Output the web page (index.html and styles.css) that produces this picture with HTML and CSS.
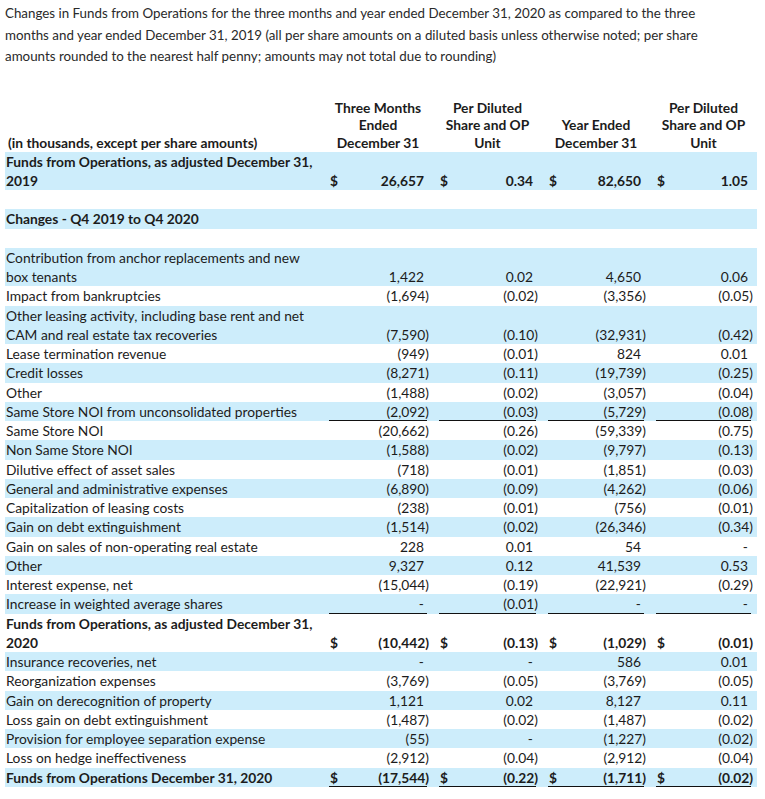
FILE: index.html
```html
<!DOCTYPE html>
<html>
<head>
<meta charset="utf-8">
<link rel="stylesheet" href="styles.css">
</head>
<body>
<p class="intro">Changes in Funds from Operations for the three months and year ended December 31, 2020 as compared to the three<br>months and year ended December 31, 2019 (all per share amounts on a diluted basis unless otherwise noted; per share<br>amounts rounded to the nearest half penny; amounts may not total due to rounding)</p>

<div class="tbl">
  <div class="row head">
    <div class="lbl">(in thousands, except per share amounts)</div>
    <div class="h">Three Months<br>Ended<br>December 31</div>
    <div class="h">Per Diluted<br>Share and OP<br>Unit</div>
    <div class="h">Year Ended<br>December 31</div>
    <div class="h">Per Diluted<br>Share and OP<br>Unit</div>
  </div>

  <div class="row blue bold">
    <div class="lbl">Funds from Operations, as adjusted December 31,<br>2019</div>
    <div class="n"><span class="d">$</span><span class="v">26,657</span></div>
    <div class="n"><span class="d">$</span><span class="v">0.34</span></div>
    <div class="n"><span class="d">$</span><span class="v">82,650</span></div>
    <div class="n"><span class="d">$</span><span class="v">1.05</span></div>
  </div>
  <div class="row"><div class="lbl">&nbsp;</div></div>
  <div class="row blue bold"><div class="lbl">Changes - Q4 2019 to Q4 2020</div></div>
  <div class="row"><div class="lbl">&nbsp;</div></div>

  <div class="row blue">
    <div class="lbl">Contribution from anchor replacements and new<br>box tenants</div>
    <div class="n"><span class="v">1,422</span></div>
    <div class="n"><span class="v">0.02</span></div>
    <div class="n"><span class="v">4,650</span></div>
    <div class="n"><span class="v">0.06</span></div>
  </div>
  <div class="row">
    <div class="lbl">Impact from bankruptcies</div>
    <div class="n"><span class="v">(1,694<i>)</i></span></div>
    <div class="n"><span class="v">(0.02<i>)</i></span></div>
    <div class="n"><span class="v">(3,356<i>)</i></span></div>
    <div class="n"><span class="v">(0.05<i>)</i></span></div>
  </div>
  <div class="row blue">
    <div class="lbl">Other leasing activity, including base rent and net<br>CAM and real estate tax recoveries</div>
    <div class="n"><span class="v">(7,590<i>)</i></span></div>
    <div class="n"><span class="v">(0.10<i>)</i></span></div>
    <div class="n"><span class="v">(32,931<i>)</i></span></div>
    <div class="n"><span class="v">(0.42<i>)</i></span></div>
  </div>
  <div class="row">
    <div class="lbl">Lease termination revenue</div>
    <div class="n"><span class="v">(949<i>)</i></span></div>
    <div class="n"><span class="v">(0.01<i>)</i></span></div>
    <div class="n"><span class="v">824</span></div>
    <div class="n"><span class="v">0.01</span></div>
  </div>
  <div class="row blue">
    <div class="lbl">Credit losses</div>
    <div class="n"><span class="v">(8,271<i>)</i></span></div>
    <div class="n"><span class="v">(0.11<i>)</i></span></div>
    <div class="n"><span class="v">(19,739<i>)</i></span></div>
    <div class="n"><span class="v">(0.25<i>)</i></span></div>
  </div>
  <div class="row">
    <div class="lbl">Other</div>
    <div class="n"><span class="v">(1,488<i>)</i></span></div>
    <div class="n"><span class="v">(0.02<i>)</i></span></div>
    <div class="n"><span class="v">(3,057<i>)</i></span></div>
    <div class="n"><span class="v">(0.04<i>)</i></span></div>
  </div>
  <div class="row blue">
    <div class="lbl">Same Store NOI from unconsolidated properties</div>
    <div class="n ul"><span class="v">(2,092<i>)</i></span></div>
    <div class="n ul"><span class="v">(0.03<i>)</i></span></div>
    <div class="n ul"><span class="v">(5,729<i>)</i></span></div>
    <div class="n ul"><span class="v">(0.08<i>)</i></span></div>
  </div>
  <div class="row">
    <div class="lbl">Same Store NOI</div>
    <div class="n"><span class="v">(20,662<i>)</i></span></div>
    <div class="n"><span class="v">(0.26<i>)</i></span></div>
    <div class="n"><span class="v">(59,339<i>)</i></span></div>
    <div class="n"><span class="v">(0.75<i>)</i></span></div>
  </div>
  <div class="row blue">
    <div class="lbl">Non Same Store NOI</div>
    <div class="n"><span class="v">(1,588<i>)</i></span></div>
    <div class="n"><span class="v">(0.02<i>)</i></span></div>
    <div class="n"><span class="v">(9,797<i>)</i></span></div>
    <div class="n"><span class="v">(0.13<i>)</i></span></div>
  </div>
  <div class="row">
    <div class="lbl">Dilutive effect of asset sales</div>
    <div class="n"><span class="v">(718<i>)</i></span></div>
    <div class="n"><span class="v">(0.01<i>)</i></span></div>
    <div class="n"><span class="v">(1,851<i>)</i></span></div>
    <div class="n"><span class="v">(0.03<i>)</i></span></div>
  </div>
  <div class="row blue">
    <div class="lbl">General and administrative expenses</div>
    <div class="n"><span class="v">(6,890<i>)</i></span></div>
    <div class="n"><span class="v">(0.09<i>)</i></span></div>
    <div class="n"><span class="v">(4,262<i>)</i></span></div>
    <div class="n"><span class="v">(0.06<i>)</i></span></div>
  </div>
  <div class="row">
    <div class="lbl">Capitalization of leasing costs</div>
    <div class="n"><span class="v">(238<i>)</i></span></div>
    <div class="n"><span class="v">(0.01<i>)</i></span></div>
    <div class="n"><span class="v">(756<i>)</i></span></div>
    <div class="n"><span class="v">(0.01<i>)</i></span></div>
  </div>
  <div class="row blue">
    <div class="lbl">Gain on debt extinguishment</div>
    <div class="n"><span class="v">(1,514<i>)</i></span></div>
    <div class="n"><span class="v">(0.02<i>)</i></span></div>
    <div class="n"><span class="v">(26,346<i>)</i></span></div>
    <div class="n"><span class="v">(0.34<i>)</i></span></div>
  </div>
  <div class="row">
    <div class="lbl">Gain on sales of non-operating real estate</div>
    <div class="n"><span class="v">228</span></div>
    <div class="n"><span class="v">0.01</span></div>
    <div class="n"><span class="v">54</span></div>
    <div class="n"><span class="v">-</span></div>
  </div>
  <div class="row blue">
    <div class="lbl">Other</div>
    <div class="n"><span class="v">9,327</span></div>
    <div class="n"><span class="v">0.12</span></div>
    <div class="n"><span class="v">41,539</span></div>
    <div class="n"><span class="v">0.53</span></div>
  </div>
  <div class="row">
    <div class="lbl">Interest expense, net</div>
    <div class="n"><span class="v">(15,044<i>)</i></span></div>
    <div class="n"><span class="v">(0.19<i>)</i></span></div>
    <div class="n"><span class="v">(22,921<i>)</i></span></div>
    <div class="n"><span class="v">(0.29<i>)</i></span></div>
  </div>
  <div class="row blue">
    <div class="lbl">Increase in weighted average shares</div>
    <div class="n ul"><span class="v">-</span></div>
    <div class="n ul"><span class="v">(0.01<i>)</i></span></div>
    <div class="n ul"><span class="v">-</span></div>
    <div class="n ul"><span class="v">-</span></div>
  </div>
  <div class="row bold">
    <div class="lbl">Funds from Operations, as adjusted December 31,<br>2020</div>
    <div class="n"><span class="d">$</span><span class="v">(10,442<i>)</i></span></div>
    <div class="n"><span class="d">$</span><span class="v">(0.13<i>)</i></span></div>
    <div class="n"><span class="d">$</span><span class="v">(1,029<i>)</i></span></div>
    <div class="n"><span class="d">$</span><span class="v">(0.01<i>)</i></span></div>
  </div>
  <div class="row blue">
    <div class="lbl">Insurance recoveries, net</div>
    <div class="n"><span class="v">-</span></div>
    <div class="n"><span class="v">-</span></div>
    <div class="n"><span class="v">586</span></div>
    <div class="n"><span class="v">0.01</span></div>
  </div>
  <div class="row">
    <div class="lbl">Reorganization expenses</div>
    <div class="n"><span class="v">(3,769<i>)</i></span></div>
    <div class="n"><span class="v">(0.05<i>)</i></span></div>
    <div class="n"><span class="v">(3,769<i>)</i></span></div>
    <div class="n"><span class="v">(0.05<i>)</i></span></div>
  </div>
  <div class="row blue">
    <div class="lbl">Gain on derecognition of property</div>
    <div class="n"><span class="v">1,121</span></div>
    <div class="n"><span class="v">0.02</span></div>
    <div class="n"><span class="v">8,127</span></div>
    <div class="n"><span class="v">0.11</span></div>
  </div>
  <div class="row">
    <div class="lbl">Loss gain on debt extinguishment</div>
    <div class="n"><span class="v">(1,487<i>)</i></span></div>
    <div class="n"><span class="v">(0.02<i>)</i></span></div>
    <div class="n"><span class="v">(1,487<i>)</i></span></div>
    <div class="n"><span class="v">(0.02<i>)</i></span></div>
  </div>
  <div class="row blue">
    <div class="lbl">Provision for employee separation expense</div>
    <div class="n"><span class="v">(55<i>)</i></span></div>
    <div class="n"><span class="v">-</span></div>
    <div class="n"><span class="v">(1,227<i>)</i></span></div>
    <div class="n"><span class="v">(0.02<i>)</i></span></div>
  </div>
  <div class="row">
    <div class="lbl">Loss on hedge ineffectiveness</div>
    <div class="n"><span class="v">(2,912<i>)</i></span></div>
    <div class="n"><span class="v">(0.04<i>)</i></span></div>
    <div class="n"><span class="v">(2,912<i>)</i></span></div>
    <div class="n"><span class="v">(0.04<i>)</i></span></div>
  </div>
  <div class="row blue bold">
    <div class="lbl">Funds from Operations December 31, 2020</div>
    <div class="n ul"><span class="d">$</span><span class="v">(17,544<i>)</i></span></div>
    <div class="n ul"><span class="d">$</span><span class="v">(0.22<i>)</i></span></div>
    <div class="n ul"><span class="d">$</span><span class="v">(1,711<i>)</i></span></div>
    <div class="n ul"><span class="d">$</span><span class="v">(0.02<i>)</i></span></div>
  </div>
</div>
</body>
</html>
```

FILE: styles.css
```css
html, body {
  margin: 0;
  padding: 0;
  background: #ffffff;
}
body {
  font-family: Lato, "Liberation Sans", sans-serif;
  color: #1c1c1c;
  padding: 3px 0 0 5px;
  width: 752px;
}
.intro {
  margin: 0;
  font-size: 13.35px;
  line-height: 21.5px;
  color: #2a2a2a;
  white-space: nowrap;
}
.tbl {
  margin-top: 31px;
  font-size: 13.8px;
}
.row {
  display: grid;
  grid-template-columns: 312px 98px 97px 96px 95px;
  column-gap: 12px;
  padding-right: 6px;
  line-height: 19.25px;
  align-items: end;
}
.row.blue {
  background: #cdedfb;
}
.row.bold {
  font-weight: bold;
}
.row.head {
  font-weight: bold;
  line-height: 17.7px;
}
.lbl {
  padding-left: 1px;
  white-space: nowrap;
}
.head .lbl {
  padding-left: 3px;
}
.h {
  text-align: center;
  white-space: nowrap;
}
.n {
  display: flex;
  justify-content: space-between;
  padding-right: 3px;
  white-space: nowrap;
}
.n.ul {
  box-shadow: inset 0 -1px 0 #111;
}
.n .d {
  padding-left: 1px;
}
.n .v {
  margin-left: auto;
}
.n .v i {
  font-style: normal;
  margin-right: -5px;
}
```
